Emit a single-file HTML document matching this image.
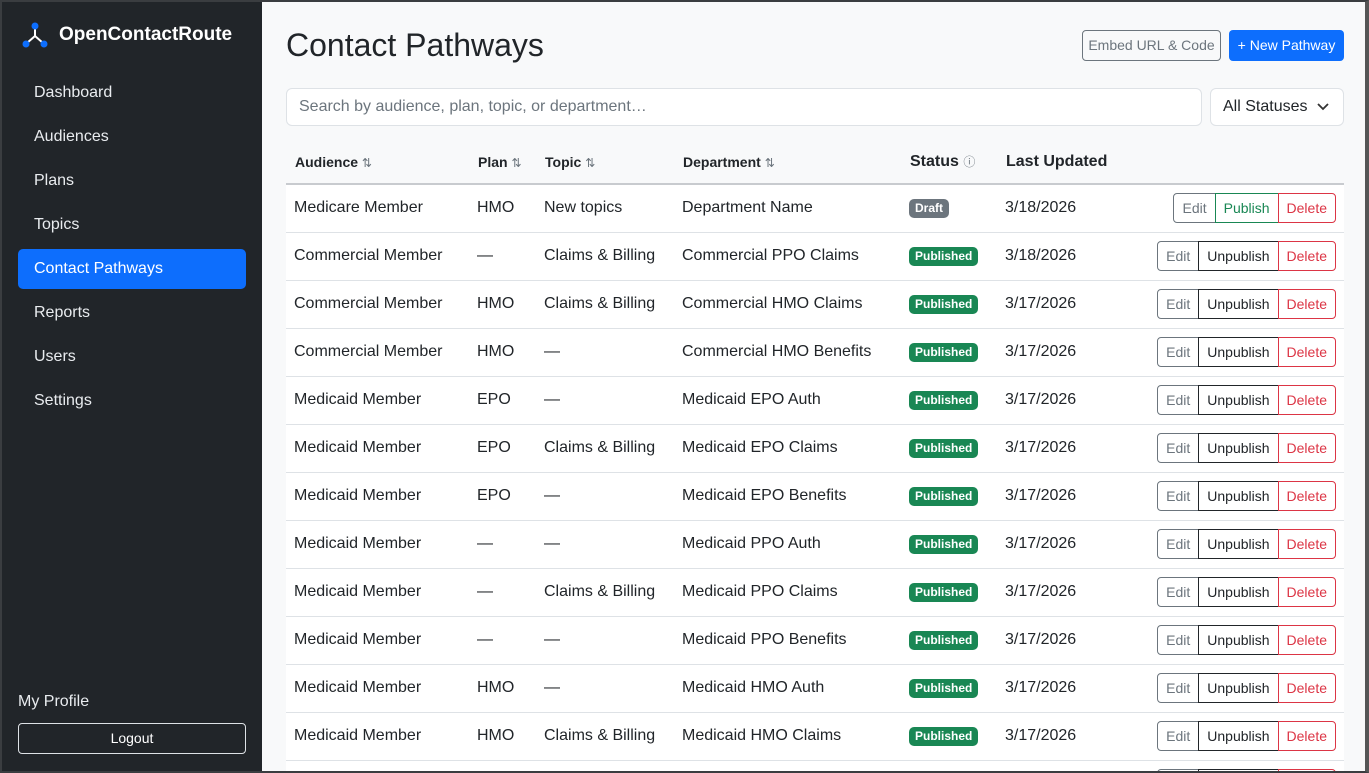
<!DOCTYPE html>
<html style="width:1369px;height:773px;overflow:hidden"><head><meta charset="utf-8"><style>
*{box-sizing:border-box;margin:0;padding:0}
body{width:1369px;height:773px;overflow:hidden;font-family:"Liberation Sans",sans-serif;background:#f8f9fa;color:#212529;position:relative}
.frame{position:fixed;left:0;top:0;width:1369px;height:773px;border:2px solid #3a3d40;border-right:4px solid #555;pointer-events:none;z-index:9}
.side{position:absolute;left:0;top:0;width:262px;height:773px;background:#212529;color:#fff}
.logo{position:absolute;left:22px;top:22px;display:flex;align-items:center;font-size:19px;font-weight:bold}
.logo svg{margin-right:11px}
.nav{position:absolute;left:18px;top:73px;width:228px}
.nav div{height:40px;line-height:40px;padding-left:16px;font-size:16px;margin-bottom:4px;border-radius:5px;color:#e9ecef}
.nav .act{background:#0d6efd;color:#fff}
.prof{position:absolute;left:18px;top:693px;font-size:16px;color:#e9ecef}
.logout{position:absolute;left:18px;top:723px;width:228px;height:31px;border:1px solid #dee2e6;border-radius:4px;text-align:center;line-height:29px;font-size:14px}
h1{position:absolute;left:286px;top:27px;font-size:32px;font-weight:normal}
.b1{position:absolute;left:1082px;top:30px;width:139px;height:31px;border:1px solid #6c757d;border-radius:4px;font-size:14px;color:#6c757d;text-align:center;line-height:29px}
.b2{position:absolute;left:1229px;top:30px;width:115px;height:31px;background:#0d6efd;border-radius:4px;font-size:14px;color:#fff;text-align:center;line-height:31px}
.search{position:absolute;left:286px;top:88px;width:916px;height:38px;border:1px solid #dee2e6;border-radius:6px;background:#fff;padding-left:12px;line-height:36px;color:#6c757d;font-size:16px}
.sel{position:absolute;left:1210px;top:88px;width:134px;height:38px;border:1px solid #dee2e6;border-radius:6px;background:#fff;padding-left:12px;line-height:36px;font-size:16px}
.sel svg{position:absolute;right:14px;top:14px}
.wrap{position:absolute;left:286px;top:140px;width:1058px;height:633px;overflow:hidden}
table{width:1058px;border-collapse:collapse}
th{height:44px;text-align:left;font-size:14px;font-weight:bold;padding-left:9px;border-bottom:2px solid #c8cbcf;color:#212529}
th.big{font-size:16px}
th .s{color:#6c757d;font-weight:normal;font-size:12px}
td{height:48px;font-size:16px;padding-left:8px;border-bottom:1px solid #dee2e6;background:#fff;white-space:nowrap}
.bd{display:inline-block;font-size:12px;font-weight:bold;color:#fff;padding:3px 6px;border-radius:5px;line-height:13px}
.dr{background:#6c757d}.pb{background:#198754}
.g{text-align:right;padding-right:8px}
.g span{display:inline-block;height:30px;line-height:28px;border:1px solid;font-size:14px;padding:0 8px;vertical-align:middle;margin-left:-1px}
.e{border-color:#6c757d;color:#6c757d;border-radius:4px 0 0 4px}
.p{border-color:#198754;color:#198754}
.u{border-color:#212529;color:#212529}
.d{border-color:#dc3545;color:#dc3545;border-radius:0 4px 4px 0}
</style></head><body>
<div class="frame"></div>
<div class="side">
<div class="logo"><svg width="26" height="26" viewBox="0 0 26 26"><path d="M13 5V14L5 21M13 14L21 21" stroke="#fff" stroke-width="2" fill="none"/><circle cx="13" cy="4" r="3.5" fill="#0d6efd"/><circle cx="4" cy="22" r="3.5" fill="#0d6efd"/><circle cx="22" cy="22" r="3.5" fill="#0d6efd"/></svg>OpenContactRoute</div>
<div class="nav"><div>Dashboard</div><div>Audiences</div><div>Plans</div><div>Topics</div><div class="act">Contact Pathways</div><div>Reports</div><div>Users</div><div>Settings</div></div>
<div class="prof">My Profile</div>
<div class="logout">Logout</div>
</div>
<h1>Contact Pathways</h1>
<div class="b1">Embed URL &amp; Code</div>
<div class="b2">+ New Pathway</div>
<div class="search">Search by audience, plan, topic, or department…</div>
<div class="sel">All Statuses<svg width="12" height="8" viewBox="0 0 12 8"><path d="M1 1l5 5 5-5" stroke="#333" stroke-width="1.8" fill="none"/></svg></div>
<div class="wrap"><table>
<tr><th style="width:183px">Audience <span class="s">⇅</span></th><th style="width:67px">Plan <span class="s">⇅</span></th><th style="width:138px">Topic <span class="s">⇅</span></th><th style="width:227px">Department <span class="s">⇅</span></th><th class="big" style="width:96px">Status <span class="s">ⓘ</span></th><th class="big" style="width:150px">Last Updated</th><th></th></tr>
<tr><td>Medicare Member</td><td>HMO</td><td>New topics</td><td>Department Name</td><td><span class="bd dr">Draft</span></td><td>3/18/2026</td><td class="g"><span class="e">Edit</span><span class="p">Publish</span><span class="d">Delete</span></td></tr>
<tr><td>Commercial Member</td><td>—</td><td>Claims &amp; Billing</td><td>Commercial PPO Claims</td><td><span class="bd pb">Published</span></td><td>3/18/2026</td><td class="g"><span class="e">Edit</span><span class="u">Unpublish</span><span class="d">Delete</span></td></tr>
<tr><td>Commercial Member</td><td>HMO</td><td>Claims &amp; Billing</td><td>Commercial HMO Claims</td><td><span class="bd pb">Published</span></td><td>3/17/2026</td><td class="g"><span class="e">Edit</span><span class="u">Unpublish</span><span class="d">Delete</span></td></tr>
<tr><td>Commercial Member</td><td>HMO</td><td>—</td><td>Commercial HMO Benefits</td><td><span class="bd pb">Published</span></td><td>3/17/2026</td><td class="g"><span class="e">Edit</span><span class="u">Unpublish</span><span class="d">Delete</span></td></tr>
<tr><td>Medicaid Member</td><td>EPO</td><td>—</td><td>Medicaid EPO Auth</td><td><span class="bd pb">Published</span></td><td>3/17/2026</td><td class="g"><span class="e">Edit</span><span class="u">Unpublish</span><span class="d">Delete</span></td></tr>
<tr><td>Medicaid Member</td><td>EPO</td><td>Claims &amp; Billing</td><td>Medicaid EPO Claims</td><td><span class="bd pb">Published</span></td><td>3/17/2026</td><td class="g"><span class="e">Edit</span><span class="u">Unpublish</span><span class="d">Delete</span></td></tr>
<tr><td>Medicaid Member</td><td>EPO</td><td>—</td><td>Medicaid EPO Benefits</td><td><span class="bd pb">Published</span></td><td>3/17/2026</td><td class="g"><span class="e">Edit</span><span class="u">Unpublish</span><span class="d">Delete</span></td></tr>
<tr><td>Medicaid Member</td><td>—</td><td>—</td><td>Medicaid PPO Auth</td><td><span class="bd pb">Published</span></td><td>3/17/2026</td><td class="g"><span class="e">Edit</span><span class="u">Unpublish</span><span class="d">Delete</span></td></tr>
<tr><td>Medicaid Member</td><td>—</td><td>Claims &amp; Billing</td><td>Medicaid PPO Claims</td><td><span class="bd pb">Published</span></td><td>3/17/2026</td><td class="g"><span class="e">Edit</span><span class="u">Unpublish</span><span class="d">Delete</span></td></tr>
<tr><td>Medicaid Member</td><td>—</td><td>—</td><td>Medicaid PPO Benefits</td><td><span class="bd pb">Published</span></td><td>3/17/2026</td><td class="g"><span class="e">Edit</span><span class="u">Unpublish</span><span class="d">Delete</span></td></tr>
<tr><td>Medicaid Member</td><td>HMO</td><td>—</td><td>Medicaid HMO Auth</td><td><span class="bd pb">Published</span></td><td>3/17/2026</td><td class="g"><span class="e">Edit</span><span class="u">Unpublish</span><span class="d">Delete</span></td></tr>
<tr><td>Medicaid Member</td><td>HMO</td><td>Claims &amp; Billing</td><td>Medicaid HMO Claims</td><td><span class="bd pb">Published</span></td><td>3/17/2026</td><td class="g"><span class="e">Edit</span><span class="u">Unpublish</span><span class="d">Delete</span></td></tr>
<tr><td>Medicaid Member</td><td>HMO</td><td>—</td><td>Medicaid HMO Benefits</td><td><span class="bd pb">Published</span></td><td>3/17/2026</td><td class="g"><span class="e">Edit</span><span class="u">Unpublish</span><span class="d">Delete</span></td></tr>
</table></div>
</body></html>
